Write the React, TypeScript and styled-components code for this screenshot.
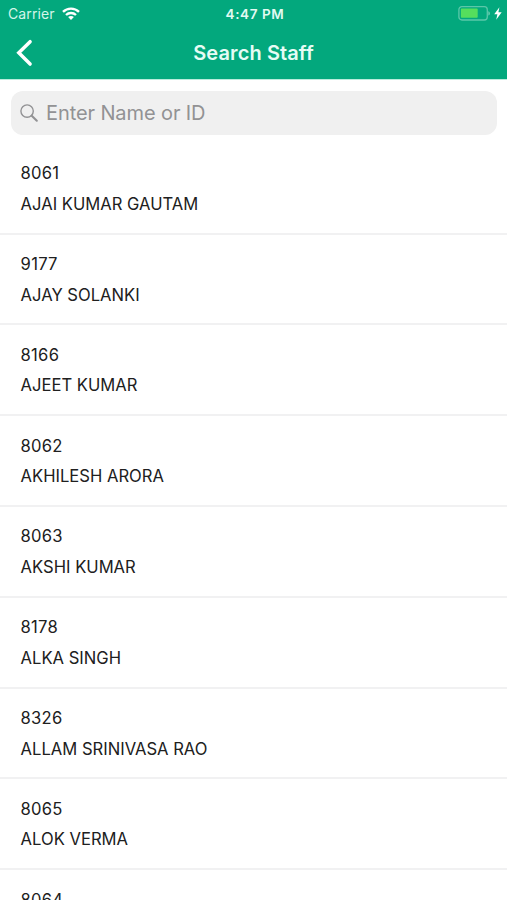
import React from 'react';
import styled, { createGlobalStyle } from 'styled-components';

const GlobalStyle = createGlobalStyle`
  * { box-sizing: border-box; }
  html, body { margin: 0; background: #fff; }
  body {
    font-family: Inter, "Liberation Sans", sans-serif;
    overflow: hidden;
  }
`;

const Screen = styled.main`
  width: 507px;
  height: 900px;
  overflow: hidden;
  background: #fff;
`;

const Header = styled.header`
  height: 80px;
  border-bottom: 1px solid #b9eddd;
  background: #03a87d;
  color: #fff;
`;

const StatusBar = styled.div`
  display: grid;
  grid-template-columns: 1fr auto 1fr;
  align-items: center;
  height: 27px;
  padding: 0 5px 0 8px;
`;

const Carrier = styled.div`
  display: flex;
  align-items: center;
  gap: 7px;
  font-size: 14px;
  letter-spacing: 0.1px;
  color: #d3f5e9;
`;

const Clock = styled.div`
  font-size: 13.5px;
  font-weight: 600;
  letter-spacing: 0.6px;
  color: #e2faf2;
`;

const Power = styled.div`
  display: flex;
  align-items: center;
  justify-content: flex-end;
  gap: 4px;
`;

const NavBar = styled.div`
  display: grid;
  grid-template-columns: 60px 1fr 60px;
  align-items: center;
  height: 51px;
`;

const BackButton = styled.button`
  display: flex;
  padding: 0 0 0 15px;
  border: 0;
  background: none;
`;

const Title = styled.h1`
  margin: 0;
  text-align: center;
  font-size: 20px;
  font-weight: 600;
  letter-spacing: 0.1px;
  color: #e6fcf5;
`;

const SearchField = styled.label`
  display: flex;
  align-items: center;
  gap: 7px;
  height: 44px;
  margin: 11px 10px 0 11px;
  padding-left: 9px;
  border-radius: 12px;
  background: #f0f0f0;
`;

const SearchInput = styled.input`
  flex: 1;
  padding: 0;
  border: 0;
  outline: 0;
  background: transparent;
  font: 400 20px Inter, "Liberation Sans", sans-serif;
  letter-spacing: -0.1px;
  color: #222;
  &::placeholder { color: #929294; opacity: 1; }
`;

const StaffList = styled.ul`
  margin: 0;
  padding: 8.9px 0 0;
  list-style: none;
`;

const StaffRow = styled.li`
  height: 90.8px;
  padding: 19.3px 20.6px 0;
  border-bottom: 2px solid #f1f1f2;
  color: #202020;
`;

const StaffId = styled.div`
  font-size: 16.6px;
  line-height: 20px;
  letter-spacing: 0.25px;
`;

const StaffName = styled.div`
  margin-top: 10.6px;
  font-size: 16.6px;
  line-height: 20px;
  white-space: nowrap;
`;

const staff = [
  { id: '8061', name: 'AJAI KUMAR GAUTAM' },
  { id: '9177', name: 'AJAY SOLANKI' },
  { id: '8166', name: 'AJEET KUMAR' },
  { id: '8062', name: 'AKHILESH ARORA' },
  { id: '8063', name: 'AKSHI KUMAR' },
  { id: '8178', name: 'ALKA SINGH' },
  { id: '8326', name: 'ALLAM SRINIVASA RAO' },
  { id: '8065', name: 'ALOK VERMA' },
  { id: '8064', name: '' },
];

const WifiIcon = () => (
  <svg width="18" height="14" viewBox="0 0 18 14" fill="none" stroke="#fff" strokeWidth="2.3">
    <path d="M1 4.9C5.4.5 12.6.5 17 4.9" />
    <path d="M4 8c2.8-2.7 7.2-2.7 10 0" />
    <path d="M9 13 6.1 10c1.6-1.5 4.2-1.5 5.8 0Z" fill="#fff" stroke="none" />
  </svg>
);

const BatteryIcon = () => (
  <svg width="32" height="15" viewBox="0 0 32 15">
    <rect x="0.9" y="0.7" width="28.4" height="13.3" rx="3" fill="none" stroke="#5bc7a9" strokeWidth="1.3" />
    <rect x="2.9" y="2.6" width="16.8" height="9.2" rx="0.8" fill="#55de5d" />
    <path d="M30.5 5.2c1.6.7 1.6 3.7 0 4.4Z" fill="#8edac3" />
  </svg>
);

const BoltIcon = () => (
  <svg width="8" height="13" viewBox="0 0 8 13">
    <path d="M5.4.3.2 7.2h3.2L2.2 12.7 7.7 5.3H4.4Z" fill="#fff" />
  </svg>
);

const BackIcon = () => (
  <svg width="18" height="28" viewBox="0 0 18 28" fill="none">
    <path d="M15.1 2.7 3.8 13.8l11.3 11.3" stroke="#fff" strokeWidth="3.5" strokeLinecap="round" strokeLinejoin="miter" />
  </svg>
);

const SearchIcon = () => (
  <svg width="19" height="19" viewBox="0 0 19 19" fill="none" stroke="#929294">
    <circle cx="7.1" cy="7.1" r="6.2" strokeWidth="1.4" />
    <path d="m11.7 11.7 5.1 5" strokeWidth="2.1" strokeLinecap="round" />
  </svg>
);

export default function App() {
  return (
    <>
      <GlobalStyle />
      <Screen>
        <Header>
          <StatusBar>
            <Carrier>
              <span>Carrier</span>
              <WifiIcon />
            </Carrier>
            <Clock>4:47 PM</Clock>
            <Power>
              <BatteryIcon />
              <BoltIcon />
            </Power>
          </StatusBar>
          <NavBar>
            <BackButton aria-label="Back">
              <BackIcon />
            </BackButton>
            <Title>Search Staff</Title>
          </NavBar>
        </Header>
        <SearchField>
          <SearchIcon />
          <SearchInput placeholder="Enter Name or ID" />
        </SearchField>
        <StaffList>
          {staff.map(({ id, name }) => (
            <StaffRow key={id}>
              <StaffId>{id}</StaffId>
              <StaffName>{name}</StaffName>
            </StaffRow>
          ))}
        </StaffList>
      </Screen>
    </>
  );
}
